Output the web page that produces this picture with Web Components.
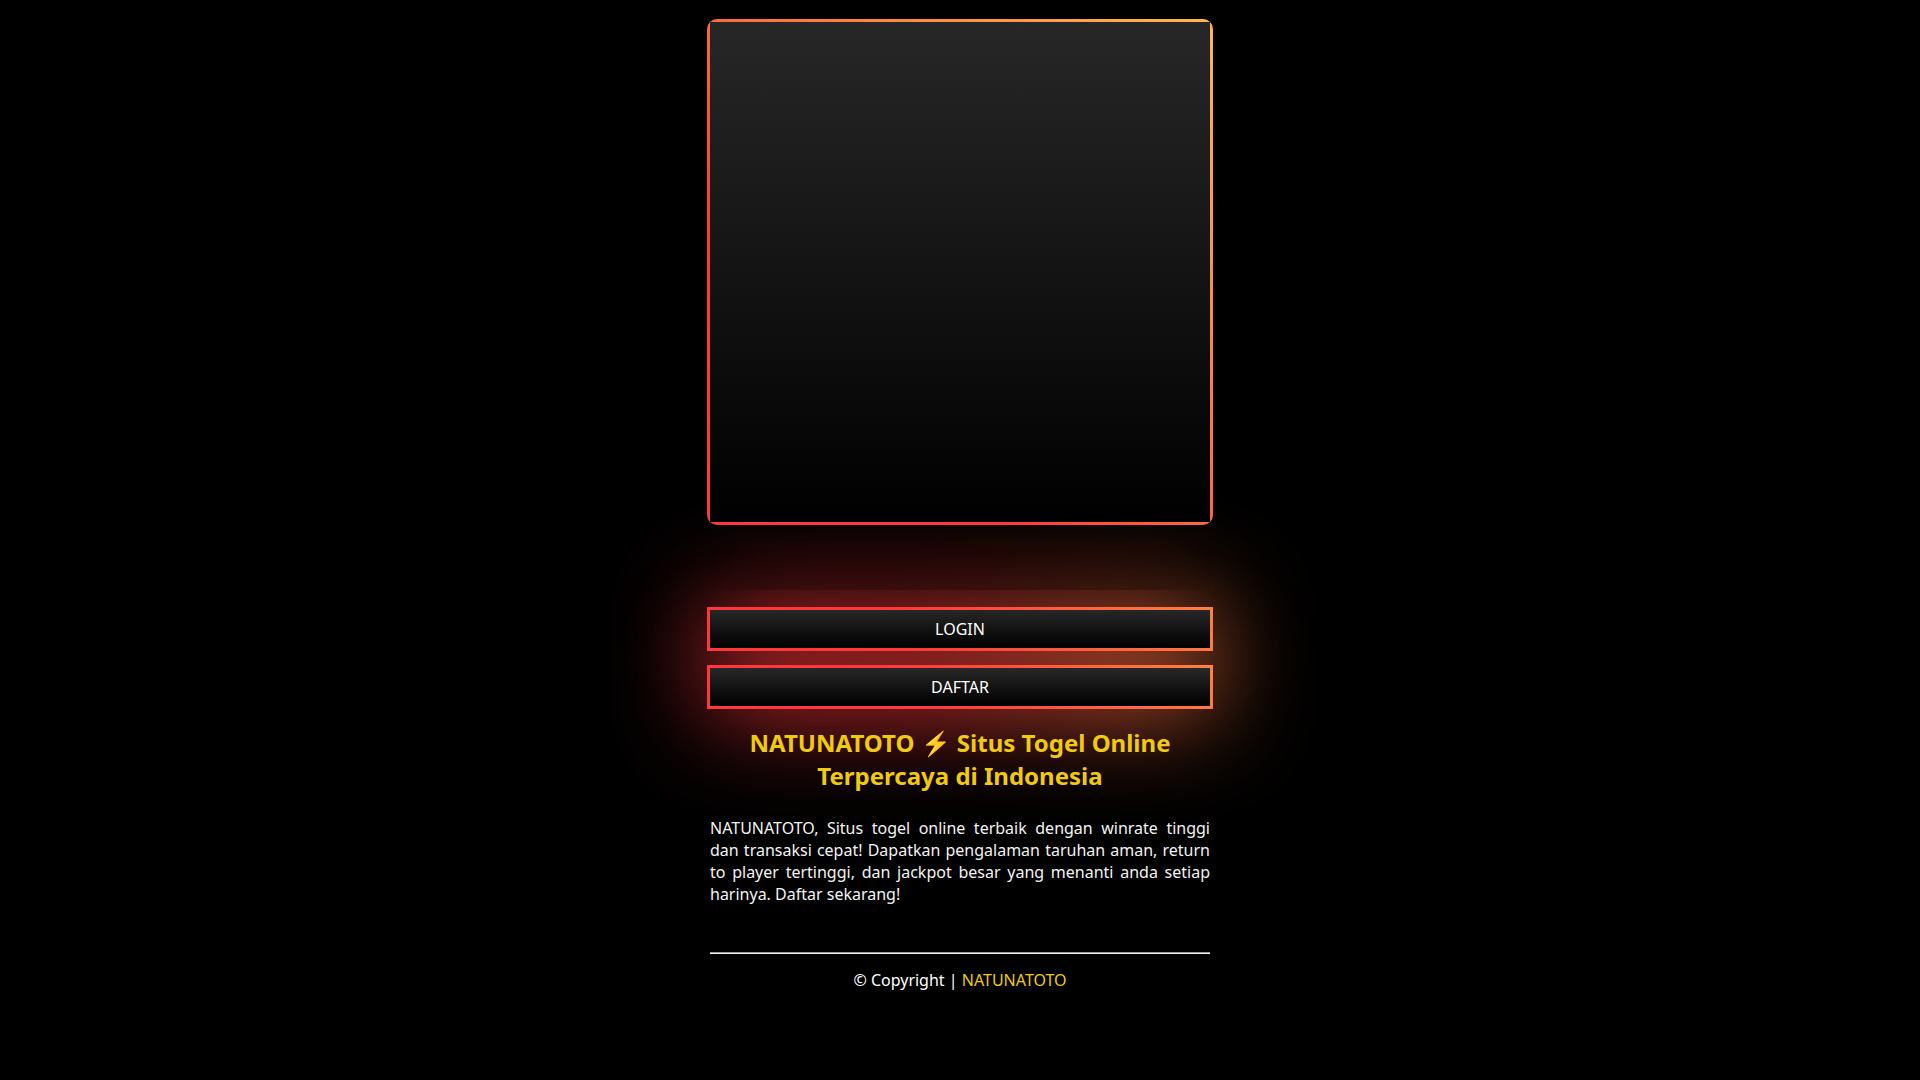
<!DOCTYPE html>
<html lang="id">
<head>
<meta charset="utf-8">
<meta name="viewport" content="width=device-width, initial-scale=1">
<title>NATUNATOTO</title>
<style>
html { background: #000; }
body { margin: 0; font: 16px/22px "Noto Sans", sans-serif; color: #fff; }
</style>
</head>
<body>
<landing-page>
  <banner-frame></banner-frame>
  <empty-strip></empty-strip>
  <glow-link slot="actions" href="#login">LOGIN</glow-link>
  <glow-link slot="actions" href="#daftar">DAFTAR</glow-link>
  <site-intro slot="intro">
    <span slot="title">NATUNATOTO ⚡ Situs Togel Online Terpercaya di Indonesia</span>
    NATUNATOTO, Situs togel online terbaik dengan winrate tinggi dan transaksi cepat! Dapatkan pengalaman taruhan aman, return to player tertinggi, dan jackpot besar yang menanti anda setiap harinya. Daftar sekarang!
  </site-intro>
  <site-footer slot="footer" href="#home">NATUNATOTO</site-footer>
</landing-page>
<script>
function define(name, html, setup) {
  const template = document.createElement('template');
  template.innerHTML = html;
  customElements.define(name, class extends HTMLElement {
    constructor() {
      super();
      this.attachShadow({ mode: 'open' }).append(template.content.cloneNode(true));
    }
    connectedCallback() { if (setup) setup(this); }
  });
}
const setHref = host => {
  host.shadowRoot.querySelector('a').href = host.getAttribute('href');
};

define('landing-page', `
<style>
:host { display: block; padding: 22px 16px 40px; }
main { max-width: 500px; margin: 0 auto; }
nav { display: flex; flex-direction: column; gap: 20px; }
</style>
<main>
  <slot></slot>
  <nav><slot name="actions"></slot></nav>
  <slot name="intro"></slot>
  <slot name="footer"></slot>
</main>`);

define('banner-frame', `
<style>
:host { display: block; position: relative; aspect-ratio: 1; background: linear-gradient(#272727, #000); }
:host::before {
  content: ""; position: absolute; inset: -3px; z-index: -1; border-radius: 10px;
  background: linear-gradient(45deg, #ff383c 29%, #ff6840 50%, #ffb84a);
}
</style>`);

// Translucent strip between the banner and the buttons; it dims the glow behind it.
define('empty-strip', `
<style>
:host {
  display: block; height: 48px; margin: 20px 0;
  background: linear-gradient(rgba(60, 8, 8, .12), rgba(0, 0, 0, .25));
  mask-image: linear-gradient(90deg, transparent, #000 10%, #000 90%, transparent);
}
</style>`);

define('glow-link', `
<style>
:host { display: block; position: relative; }
a {
  display: block; padding: 8px; text-align: center; color: #fff; text-decoration: none;
  background: linear-gradient(#272727, #000);
}
:host::before, :host::after {
  content: ""; position: absolute; inset: -3px; z-index: -1;
  background: linear-gradient(45deg, #ff383c 42%, #ff8442);
}
:host::after { filter: blur(50px); }
</style>
<a><slot></slot></a>`, setHref);

define('site-intro', `
<style>
:host { display: block; }
h1 { margin: 20px 0 0; font-size: 24px; line-height: 33px; text-align: center; color: #efcb0c; }
p { margin: 25px 0 0; text-align: justify; color: #f3f3f3; }
</style>
<h1><slot name="title"></slot></h1>
<p><slot></slot></p>`);

define('site-footer', `
<style>
:host { display: block; margin-top: 47px; text-align: center; }
hr { margin: 0 0 15px; border: 0; border-top: 1px solid #9a9a9a; border-bottom: 1px solid #eee; }
a { color: #efcb0c; text-decoration: none; }
</style>
<hr>
<footer>© Copyright | <a><slot></slot></a></footer>`, setHref);
</script>
</body>
</html>
